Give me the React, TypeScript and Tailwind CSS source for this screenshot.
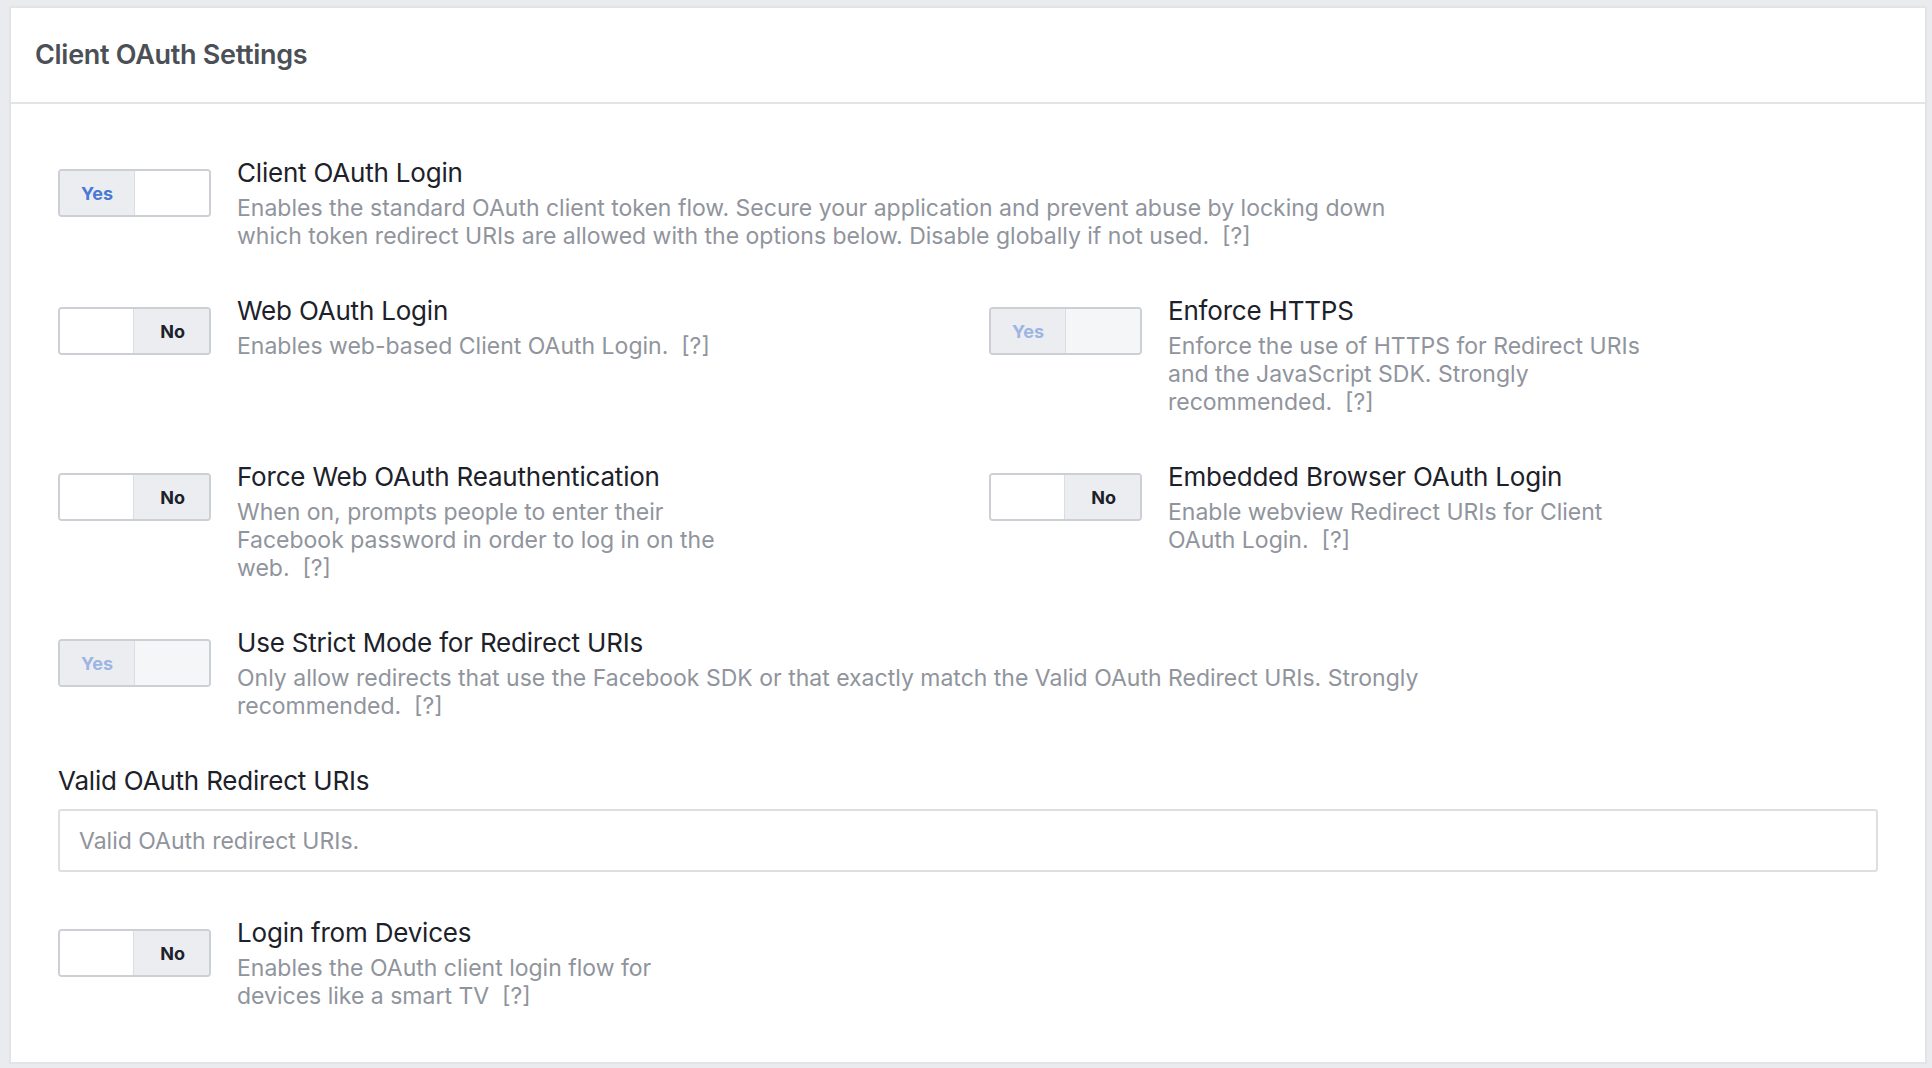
import React from 'react';

type ToggleState = 'yes' | 'no' | 'yes-disabled';

const Toggle = ({ state }: { state: ToggleState }) => {
  if (state === 'no') {
    return (
      <div className="flex h-[48px] w-[153px] shrink-0 overflow-hidden rounded-[4px] border-2 border-[#ccd0d5] mt-[11px]">
        <div className="flex-1 bg-white border-r border-[#dadde1]" />
        <div className="flex flex-1 items-center justify-center pl-[3px] bg-[#ebedf0] text-[18px] font-bold text-[#1d2129]">
          No
        </div>
      </div>
    );
  }
  const disabled = state === 'yes-disabled';
  return (
    <div className="flex h-[48px] w-[153px] shrink-0 overflow-hidden rounded-[4px] border-2 border-[#ccd0d5] mt-[11px]">
      <div
        className={
          disabled
            ? 'flex flex-1 items-center justify-center bg-[#ebedf0] text-[18px] font-bold text-[#9db5e3] border-r border-[#dadde1]'
            : 'flex flex-1 items-center justify-center bg-[#ebedf0] text-[18px] font-bold text-[#4a78d6] border-r border-[#dadde1]'
        }
      >
        Yes
      </div>
      <div className={disabled ? 'flex-1 bg-[#f5f6f7]' : 'flex-1 bg-white'} />
    </div>
  );
};

const Setting = ({
  state,
  title,
  desc,
  wide,
}: {
  state: ToggleState;
  title: string;
  desc: string;
  wide?: boolean;
}) => (
  <div className="flex gap-[26px]">
    <Toggle state={state} />
    <div className={wide ? 'max-w-[1206px]' : 'max-w-[480px]'}>
      <div className="text-[26px] leading-[30px] text-[#1d2129] tracking-[-0.2px]">{title}</div>
      <p className="mt-[6px] text-[23px] leading-[28px] text-[#90949c]">
        {desc}&nbsp; [?]
      </p>
    </div>
  </div>
);

export default function App() {
  return (
    <div className="min-h-screen bg-[#e9ebee] pt-[6px] pl-[9px] pr-[5px] pb-[8px] font-['Inter',sans-serif]">
      <div className="bg-white border-2 border-[#e3e4e8]">
        <div className="flex h-[96px] items-center border-b-2 border-[#e3e4e8] px-[24px]">
          <h2 className="text-[27px] font-semibold text-[#4b4f56] tracking-[-0.3px]">Client OAuth Settings</h2>
        </div>

        <div className="flex flex-col gap-[46px] px-[47px] pt-[54px] pb-[52px]">
          <Setting
            wide
            state="yes"
            title="Client OAuth Login"
            desc="Enables the standard OAuth client token flow. Secure your application and prevent abuse by locking down which token redirect URIs are allowed with the options below. Disable globally if not used."
          />

          <div className="grid grid-cols-2 gap-x-[42px]">
            <Setting state="no" title="Web OAuth Login" desc="Enables web-based Client OAuth Login." />
            <Setting
              state="yes-disabled"
              title="Enforce HTTPS"
              desc="Enforce the use of HTTPS for Redirect URIs and the JavaScript SDK. Strongly recommended."
            />
          </div>

          <div className="grid grid-cols-2 gap-x-[42px]">
            <Setting
              state="no"
              title="Force Web OAuth Reauthentication"
              desc="When on, prompts people to enter their Facebook password in order to log in on the web."
            />
            <Setting
              state="no"
              title="Embedded Browser OAuth Login"
              desc="Enable webview Redirect URIs for Client OAuth Login."
            />
          </div>

          <Setting
            wide
            state="yes-disabled"
            title="Use Strict Mode for Redirect URIs"
            desc="Only allow redirects that use the Facebook SDK or that exactly match the Valid OAuth Redirect URIs. Strongly recommended."
          />

          <div>
            <label className="block text-[26px] leading-[30px] text-[#1d2129] tracking-[-0.2px]">
              Valid OAuth Redirect URIs
            </label>
            <input
              type="text"
              placeholder="Valid OAuth redirect URIs."
              className="mt-[13px] block h-[63px] w-full rounded-[3px] border-2 border-[#dddfe2] px-[19px] text-[23px] text-[#1d2129] placeholder:text-[#90949c] outline-none"
            />
          </div>

          <Setting
            state="no"
            title="Login from Devices"
            desc="Enables the OAuth client login flow for devices like a smart TV"
          />
        </div>
      </div>
    </div>
  );
}
